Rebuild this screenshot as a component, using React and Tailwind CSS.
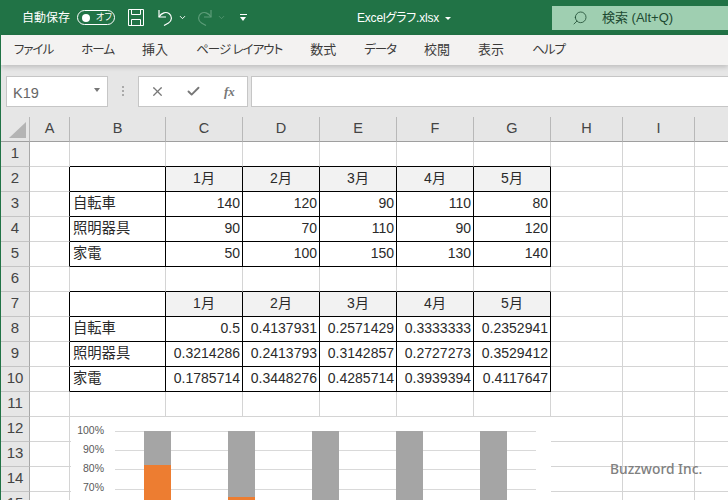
import React from "react";
import { Search, ChevronDown, X, Check } from "lucide-react";

const font = "font-['Liberation_Sans','Noto_Sans_CJK_JP',sans-serif]";
// last column runs off the window, its letter is not visible
const columns = ["A", "B", "C", "D", "E", "F", "G", "H", "I", ""];
const tabs = [
  { label: "ファイル", kana: true },
  { label: "ホーム", kana: true },
  { label: "挿入" },
  { label: "ページ レイアウト", kana: true },
  { label: "数式" },
  { label: "データ", kana: true },
  { label: "校閲" },
  { label: "表示" },
  { label: "ヘルプ", kana: true },
];
const months = ["1月", "2月", "3月", "4月", "5月"];

const tables = {
  2: ["", ...months],
  3: ["自転車", 140, 120, 90, 110, 80],
  4: ["照明器具", 90, 70, 110, 90, 120],
  5: ["家電", 50, 100, 150, 130, 140],
  7: ["", ...months],
  8: ["自転車", 0.5, 0.4137931, 0.2571429, 0.3333333, 0.2352941],
  9: ["照明器具", 0.3214286, 0.2413793, 0.3142857, 0.2727273, 0.3529412],
  10: ["家電", 0.1785714, 0.3448276, 0.4285714, 0.3939394, 0.4117647],
};

const chartLabels = ["100%", "90%", "80%", "70%", "60%", "50%"];
const chartBars = [
  [0.1785714, 0.3214286, 0.5],
  [0.3448276, 0.2413793, 0.4137931],
  [0.4285714, 0.3142857, 0.2571429],
  [0.3939394, 0.2727273, 0.3333333],
  [0.4117647, 0.3529412, 0.2352941],
];

function UndoIcon({ className }) {
  return (
    <svg className={className} width="15" height="17" viewBox="0 0 15 17" fill="none" stroke="currentColor" strokeWidth="1.2">
      <path d="M1 1v7h7" />
      <path d="M1 8C3.500 3.500 8 2.500 11 4.500c3.500 2.500 3 7.500-.5 9.500L6 16.500" />
    </svg>
  );
}

function TitleBar() {
  return (
    <div className="flex h-[35px] items-center bg-[#217346] text-white [font-feature-settings:'palt']">
      <span className="ml-[21px] text-[12px]">自動保存</span>
      <div className="ml-[7px] flex h-[15px] w-[38px] items-center rounded-full border border-white pl-[4px]">
        <div className="h-[8px] w-[8px] rounded-full bg-white" />
        <span className="ml-[6px] text-[9px]">オフ</span>
      </div>
      <svg className="ml-[13px]" width="16" height="17" viewBox="0 0 16 17" fill="none" stroke="#fff" strokeWidth="1">
        <path d="M.5.5h15v16H.5z" />
        <path d="M3.500.5v5h9v-5M3.500 16.500v-6h9v6" />
      </svg>
      <UndoIcon className="ml-[14px]" />
      <ChevronDown className="ml-[5px]" size={9} strokeWidth={2.5} />
      <UndoIcon className="ml-[10px] -scale-x-100 text-[#5c9c78]" />
      <ChevronDown className="ml-[5px] text-[#5c9c78]" size={9} strokeWidth={2} />
      <div className="ml-[12px] flex w-[10px] flex-col items-center">
        <div className="mb-[2px] h-[1px] w-[7px] bg-white" />
        <div className="h-0 w-0 border-x-[3.5px] border-t-[4px] border-x-transparent border-t-white" />
      </div>
      <span className="ml-[109px] text-[12px] tracking-[-0.2px]">Excelグラフ.xlsx</span>
      <div className="ml-[6px] mt-[1px] h-0 w-0 border-x-[3px] border-t-[3px] border-x-transparent border-t-white" />
      <div className="ml-auto mt-[6px] flex h-[24px] w-[176px] items-center self-start bg-[#9fcfb1] text-[#1d4a31]">
        <Search className="ml-[20px] -scale-x-100" size={16} strokeWidth={1.2} />
        <span className="ml-[14px] text-[13px]">検索 (Alt+Q)</span>
      </div>
    </div>
  );
}

function RibbonTabs() {
  return (
    <div className="relative z-10 flex h-[30px] items-center gap-[28px] bg-[#f3f2f1] pl-[13px] text-[#3b3a39] shadow-[0_2px_5px_rgba(0,0,0,0.18)] [font-feature-settings:'palt']">
      {tabs.map((t) => (
        <span key={t.label} className={t.kana ? "text-[12.5px] tracking-[-1px]" : "text-[13px]"}>
          {t.label}
        </span>
      ))}
    </div>
  );
}

function FormulaBar() {
  return (
    <div className="flex h-[52px] items-start bg-[#e6e6e6] pt-[11px]">
      <div className="ml-[5px] flex h-[31px] w-[102px] items-center border border-[#c6c6c6] bg-white pl-[6px] pr-[7px] pt-[4px] text-[14.5px] text-[#666]">
        K19
        <div className="ml-auto -mt-[7px] h-0 w-0 border-x-[3.5px] border-t-[4px] border-x-transparent border-t-[#777]" />
      </div>
      <div className="ml-[14px] mt-[10px] flex w-[3px] flex-col gap-[2px]">
        <div className="h-[2px] w-[2px] bg-[#aaa]" />
        <div className="h-[2px] w-[2px] bg-[#aaa]" />
        <div className="h-[2px] w-[2px] bg-[#aaa]" />
      </div>
      <div className="ml-[13px] flex h-[31px] w-[110px] items-center border border-[#c6c6c6] bg-white text-[#777]">
        <X className="ml-[11px]" size={15} strokeWidth={2} />
        <Check className="ml-[21px]" size={15} strokeWidth={3} />
        <span className="ml-[23px] font-['Liberation_Serif',serif] text-[13px] font-bold italic">fx</span>
      </div>
      <div className="ml-[3px] h-[31px] flex-1 border border-r-0 border-[#c6c6c6] bg-white" />
    </div>
  );
}

function cellStyle(row, colIndex) {
  const inTable = colIndex >= 1 && colIndex <= 6;
  const tableRow = tables[row];
  const beforeTable = tables[row + 1] && inTable;
  const leftOfTable = tableRow && colIndex === 0;
  if (tableRow && inTable) return "border-r border-b border-r-black border-b-black";
  if (beforeTable) return "border-r border-b border-r-[#d4d4d4] border-b-black";
  if (leftOfTable) return "border-r border-b border-r-black border-b-[#d4d4d4]";
  return "border-r border-b border-r-[#d4d4d4] border-b-[#d4d4d4]";
}

function Cell({ row, colIndex }) {
  const value = tables[row] && colIndex <= 6 && colIndex >= 1 ? tables[row][colIndex - 1] : "";
  const isMonth = typeof value === "string" && value.endsWith("月");
  const isLabel = colIndex === 1;
  return (
    <div
      className={`flex items-center overflow-hidden whitespace-nowrap text-[#2a2a2a] ${cellStyle(row, colIndex)} ${
        isMonth
          ? "justify-center bg-[#f2f2f2] text-[14px]"
          : isLabel
            ? "justify-start pl-[3px] text-[14.3px]"
            : "justify-end pr-[2px] text-[14px]"
      }`}
    >
      {value}
    </div>
  );
}

function Chart() {
  return (
    <div className={`absolute left-[70px] top-[300px] flex w-[480px] bg-white pt-[14px] ${font}`}>
      <div className="flex w-[33px] flex-col items-end">
        {chartLabels.map((l) => (
          <div key={l} className="flex h-[19.2px] -translate-y-[10px] items-center text-[10.5px] text-[#595959]">
            {l}
          </div>
        ))}
      </div>
      <div className="relative ml-[11px] w-[421px]">
        {chartLabels.map((l) => (
          <div key={l} className="h-[19.2px] border-t border-[#d9d9d9]" />
        ))}
        <div className="absolute inset-x-0 top-0 grid grid-cols-5">
          {chartBars.map((parts, i) => (
            <div key={i} className="mx-auto flex w-[27px] flex-col">
              <div className="bg-[#a5a5a5]" style={{ height: parts[0] * 192 }} />
              <div className="bg-[#ed7d31]" style={{ height: parts[1] * 192 }} />
              <div className="bg-[#4472c4]" style={{ height: parts[2] * 192 }} />
            </div>
          ))}
        </div>
      </div>
    </div>
  );
}

function Sheet() {
  const rows = Array.from({ length: 15 }, (_, i) => i + 1);
  return (
    <div className="relative">
      <div className="grid grid-cols-[29px_40px_96px_77px_77px_77px_77px_77px_72px_72px_72px] grid-rows-[24.5px] auto-rows-[25px]">
        <div className="relative border-r border-b border-r-[#b8b8b8] border-b-[#9f9f9f] bg-[#e6e6e6]">
          <div className="absolute left-[8px] top-[5px] h-0 w-0 border-b-[16px] border-l-[17px] border-b-[#b4b4b4] border-l-transparent" />
        </div>
        {columns.map((c, i) => (
          <div
            key={i}
            className="flex items-center justify-center border-r border-b border-r-[#b8b8b8] border-b-[#9f9f9f] bg-[#e6e6e6] text-[14.5px] text-[#444]"
          >
            {c}
          </div>
        ))}
        {rows.map((r) => (
          <React.Fragment key={r}>
            <div className="flex items-center justify-center border-r border-b border-r-[#a8a8a8] border-b-[#c4c4c4] bg-[#e6e6e6] text-[15px] text-[#444]">
              {r}
            </div>
            {columns.map((c, i) => (
              <Cell key={i} row={r} colIndex={i} />
            ))}
          </React.Fragment>
        ))}
      </div>
      <Chart />
      <span className="absolute left-[609px] top-[342px] font-['Noto_Sans',sans-serif] text-[13.8px] font-medium text-[#808080]">
        Buzzword Inc.
      </span>
    </div>
  );
}

export default function App() {
  return (
    <div className={`h-[500px] w-[728px] overflow-hidden border-l border-[#217346] bg-white ${font}`}>
      <TitleBar />
      <RibbonTabs />
      <FormulaBar />
      <Sheet />
    </div>
  );
}
